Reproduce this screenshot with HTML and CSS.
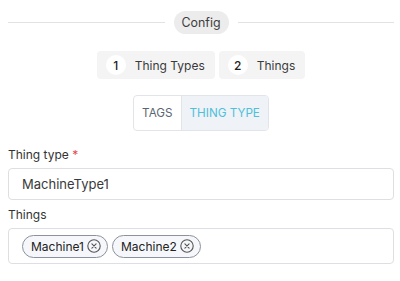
FILE: index.html
```html
<!DOCTYPE html>
<html lang="en">
  <head>
    <meta charset="utf-8" />
    <title>Config</title>
    <link rel="stylesheet" href="styles.css">
  </head>
  <body>
    <div class="config">
      <div class="divider">
        <span class="divider__line"></span>
        <span class="divider__pill">Config</span>
        <span class="divider__line"></span>
      </div>

      <div class="steps">
        <div class="step">
          <span class="step__num">1</span>
          <span class="step__label">Thing Types</span>
        </div>
        <div class="step">
          <span class="step__num">2</span>
          <span class="step__label">Things</span>
        </div>
      </div>

      <div class="toggle">
        <div class="toggle__btn">TAGS</div>
        <div class="toggle__btn active">THING TYPE</div>
      </div>

      <div class="field">
        <label class="field__label">Thing type <span class="req">*</span></label>
        <div class="field__input">MachineType1</div>
      </div>

      <div class="field">
        <label class="field__label">Things</label>
        <div class="field__input chips">
          <span class="chip">Machine1
            <svg class="chip__x" viewBox="0 0 14 14" width="14" height="14">
              <circle cx="7" cy="7" r="6.2" fill="none" stroke="currentColor" stroke-width="1.1" />
              <path d="M4.9 4.9 L9.1 9.1 M9.1 4.9 L4.9 9.1" stroke="currentColor" stroke-width="1.1" stroke-linecap="round" />
            </svg>
          </span>
          <span class="chip">Machine2
            <svg class="chip__x" viewBox="0 0 14 14" width="14" height="14">
              <circle cx="7" cy="7" r="6.2" fill="none" stroke="currentColor" stroke-width="1.1" />
              <path d="M4.9 4.9 L9.1 9.1 M9.1 4.9 L4.9 9.1" stroke="currentColor" stroke-width="1.1" stroke-linecap="round" />
            </svg>
          </span>
        </div>
      </div>
    </div>
  </body>
</html>
```

FILE: styles.css
```css
body {
  margin: 0;
  background: white;
  font-family: Inter, "Liberation Sans", sans-serif;
  color: #333;
}
.config {
  display: flex;
  flex-direction: column;
  align-items: center;
  padding: 11px 6px 0 8px;
}
.divider {
  display: flex;
  align-items: center;
  align-self: stretch;
  gap: 9px;
}
.divider__line {
  flex: 1;
  height: 1px;
  background: #e2e2e2;
}
.divider__pill {
  height: 23px;
  line-height: 23px;
  padding: 0 8px;
  border-radius: 12px;
  background: #ececec;
  font-size: 12.4px;
  color: #3c3c3c;
}
.steps {
  display: flex;
  gap: 4px;
  margin-top: 17px;
}
.step {
  display: flex;
  align-items: center;
  height: 28px;
  padding: 0 10px 0 9px;
  border-radius: 4px;
  background: #f4f4f4;
  font-size: 12px;
}
.step__num {
  width: 20px;
  height: 20px;
  border-radius: 50%;
  background: white;
  display: flex;
  justify-content: center;
  align-items: center;
  font-weight: 500;
  color: #222;
  margin-right: 9px;
}
.step__label {
  color: #3a3a3a;
}
.toggle {
  display: flex;
  margin-top: 16px;
  height: 36px;
  border: 1px solid #e1e5ea;
  border-radius: 4px;
  overflow: hidden;
  box-sizing: border-box;
}
.toggle__btn {
  display: flex;
  align-items: center;
  padding: 0 8px;
  font-size: 11.7px;
  color: #5b6572;
}
.toggle__btn + .toggle__btn {
  border-left: 1px solid #e1e5ea;
}
.toggle__btn.active {
  background: #eff2f6;
  color: #4dc0da;
}
.field {
  align-self: stretch;
  display: flex;
  flex-direction: column;
}
.toggle + .field {
  margin-top: 15px;
}
.field + .field {
  margin-top: 6px;
}
.field__label {
  font-size: 12px;
  line-height: 18px;
  color: #333;
  margin-bottom: 4px;
}
.req {
  color: #e5484d;
}
.field__input {
  height: 32px;
  box-sizing: border-box;
  border: 1px solid #dcdfe4;
  border-radius: 4px;
  display: flex;
  align-items: center;
  padding: 0 13px;
  font-size: 13px;
  color: #3a3a3a;
}
.field__input.chips {
  height: 36px;
  gap: 4px;
}
.chip {
  display: flex;
  align-items: center;
  gap: 3px;
  height: 23px;
  box-sizing: border-box;
  padding: 0 6px 0 8px;
  border: 1px solid #8c929b;
  border-radius: 12px;
  background: #f5f7fa;
  font-size: 12px;
  color: #222;
}
.chip__x {
  color: #555;
}
```
